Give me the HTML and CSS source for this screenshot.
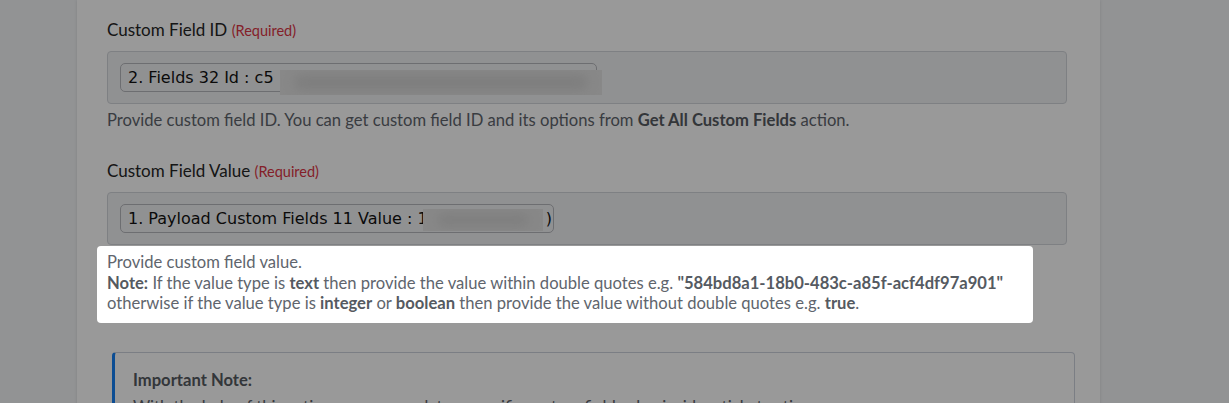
FILE: index.html
```html
<!DOCTYPE html>
<html lang="en">
<head>
<meta charset="utf-8">
<title>Custom Field</title>
<link rel="stylesheet" href="styles.css">
</head>
<body>
<div class="page">
  <div class="card">
    <div class="field">
      <div class="label">Custom Field ID <span class="req">(Required)</span></div>
      <div class="input">
        <span class="token token-id">2. Fields 32 Id : c5<span class="redact redact-id"></span></span>
      </div>
      <div class="help">Provide custom field ID. You can get custom field ID and its options from <b>Get All Custom Fields</b> action.</div>
    </div>

    <div class="field">
      <div class="label">Custom Field Value <span class="req">(Required)</span></div>
      <div class="input">
        <span class="token token-val">1. Payload Custom Fields 11 Value : 1<span class="gap"></span>)<span class="redact redact-val"></span></span>
      </div>
      <div class="help spot">Provide custom field value.<br><b>Note:</b> If the value type is <b>text</b> then provide the value within double quotes e.g. <b>"584bd8a1-18b0-483c-a85f-acf4df97a901"</b><br>otherwise if the value type is <b>integer</b> or <b>boolean</b> then provide the value without double quotes e.g. <b>true</b>.</div>
    </div>

    <div class="notice">
      <div class="notice-title">Important Note:</div>
      <div class="notice-body">With the help of this action, you can update a specific custom field value inside a ticket action.</div>
    </div>
  </div>
</div>
</body>
</html>
```

FILE: styles.css
```css
html, body {
  margin: 0;
  padding: 0;
  height: 100%;
  overflow: hidden;
}
body {
  background: #f3f5f7;
  font-family: Lato, "Open Sans", Arial, sans-serif;
  color: #2b2b2b;
}
.page {
  padding-left: 77px;
}
.card {
  width: 1023px;
  min-height: 420px;
  box-sizing: border-box;
  background: #ffffff;
  box-shadow: 0 0 3px rgba(0, 0, 0, 0.12);
  padding: 18px 33px 0 30px;
}
.field {
  margin-bottom: 29px;
}
.label {
  font-size: 17px;
  line-height: 24px;
  color: #262626;
  margin-bottom: 8px;
}
.req {
  font-size: 14.5px;
  color: #dc3545;
}
.input {
  height: 53px;
  box-sizing: border-box;
  border: 1px solid #d2d5db;
  border-radius: 4px;
  background: #f1f2f4;
  padding: 11px 12px;
}
.token {
  position: relative;
  display: inline-block;
  box-sizing: border-box;
  height: 29px;
  border: 1px solid #b6b8bd;
  border-radius: 5px;
  padding: 0 7px;
  font-family: "DejaVu Sans", Verdana, sans-serif;
  font-size: 16px;
  line-height: 27px;
  color: #111;
  background: #f1f2f4;
  white-space: nowrap;
  vertical-align: top;
}
.token-id {
  width: 477px;
}
.token-val {
  width: 434px;
}
.gap {
  display: inline-block;
  width: 118px;
}
.redact {
  position: absolute;
  background: #e3e3e3;
  overflow: hidden;
}
.redact::after {
  content: "";
  position: absolute;
  left: 14px;
  right: 14px;
  top: 6px;
  bottom: 6px;
  background: #cfcfcf;
  border-radius: 10px;
  filter: blur(6px);
}
.redact-id {
  left: 159px;
  top: 6px;
  width: 322px;
  height: 25px;
}
.redact-val {
  left: 302px;
  top: 4px;
  width: 120px;
  height: 22px;
}
.help {
  margin-top: 6px;
  font-size: 16.6px;
  line-height: 20px;
  color: #60656d;
}
.help b {
  color: #555a61;
}
.spot {
  position: relative;
  z-index: 5;
  width: 919px;
  margin: 1px 0 0 -10px;
  padding: 6px 7px 9px 10px;
  line-height: 20.5px;
  background: #ffffff;
  border-radius: 4px;
  box-shadow: 0 0 0 3000px rgba(0, 0, 0, 0.4);
}
.notice {
  margin-left: 5px;
  width: 963px;
  box-sizing: border-box;
  border: 1px solid #cdd2dc;
  border-left: 3px solid #1481f5;
  border-radius: 4px;
  padding: 17px 18px 10px;
  font-size: 16.6px;
  line-height: 20px;
  color: #5e636b;
}
.notice-title {
  font-weight: bold;
  color: #555a61;
  margin-bottom: 7px;
}
```
